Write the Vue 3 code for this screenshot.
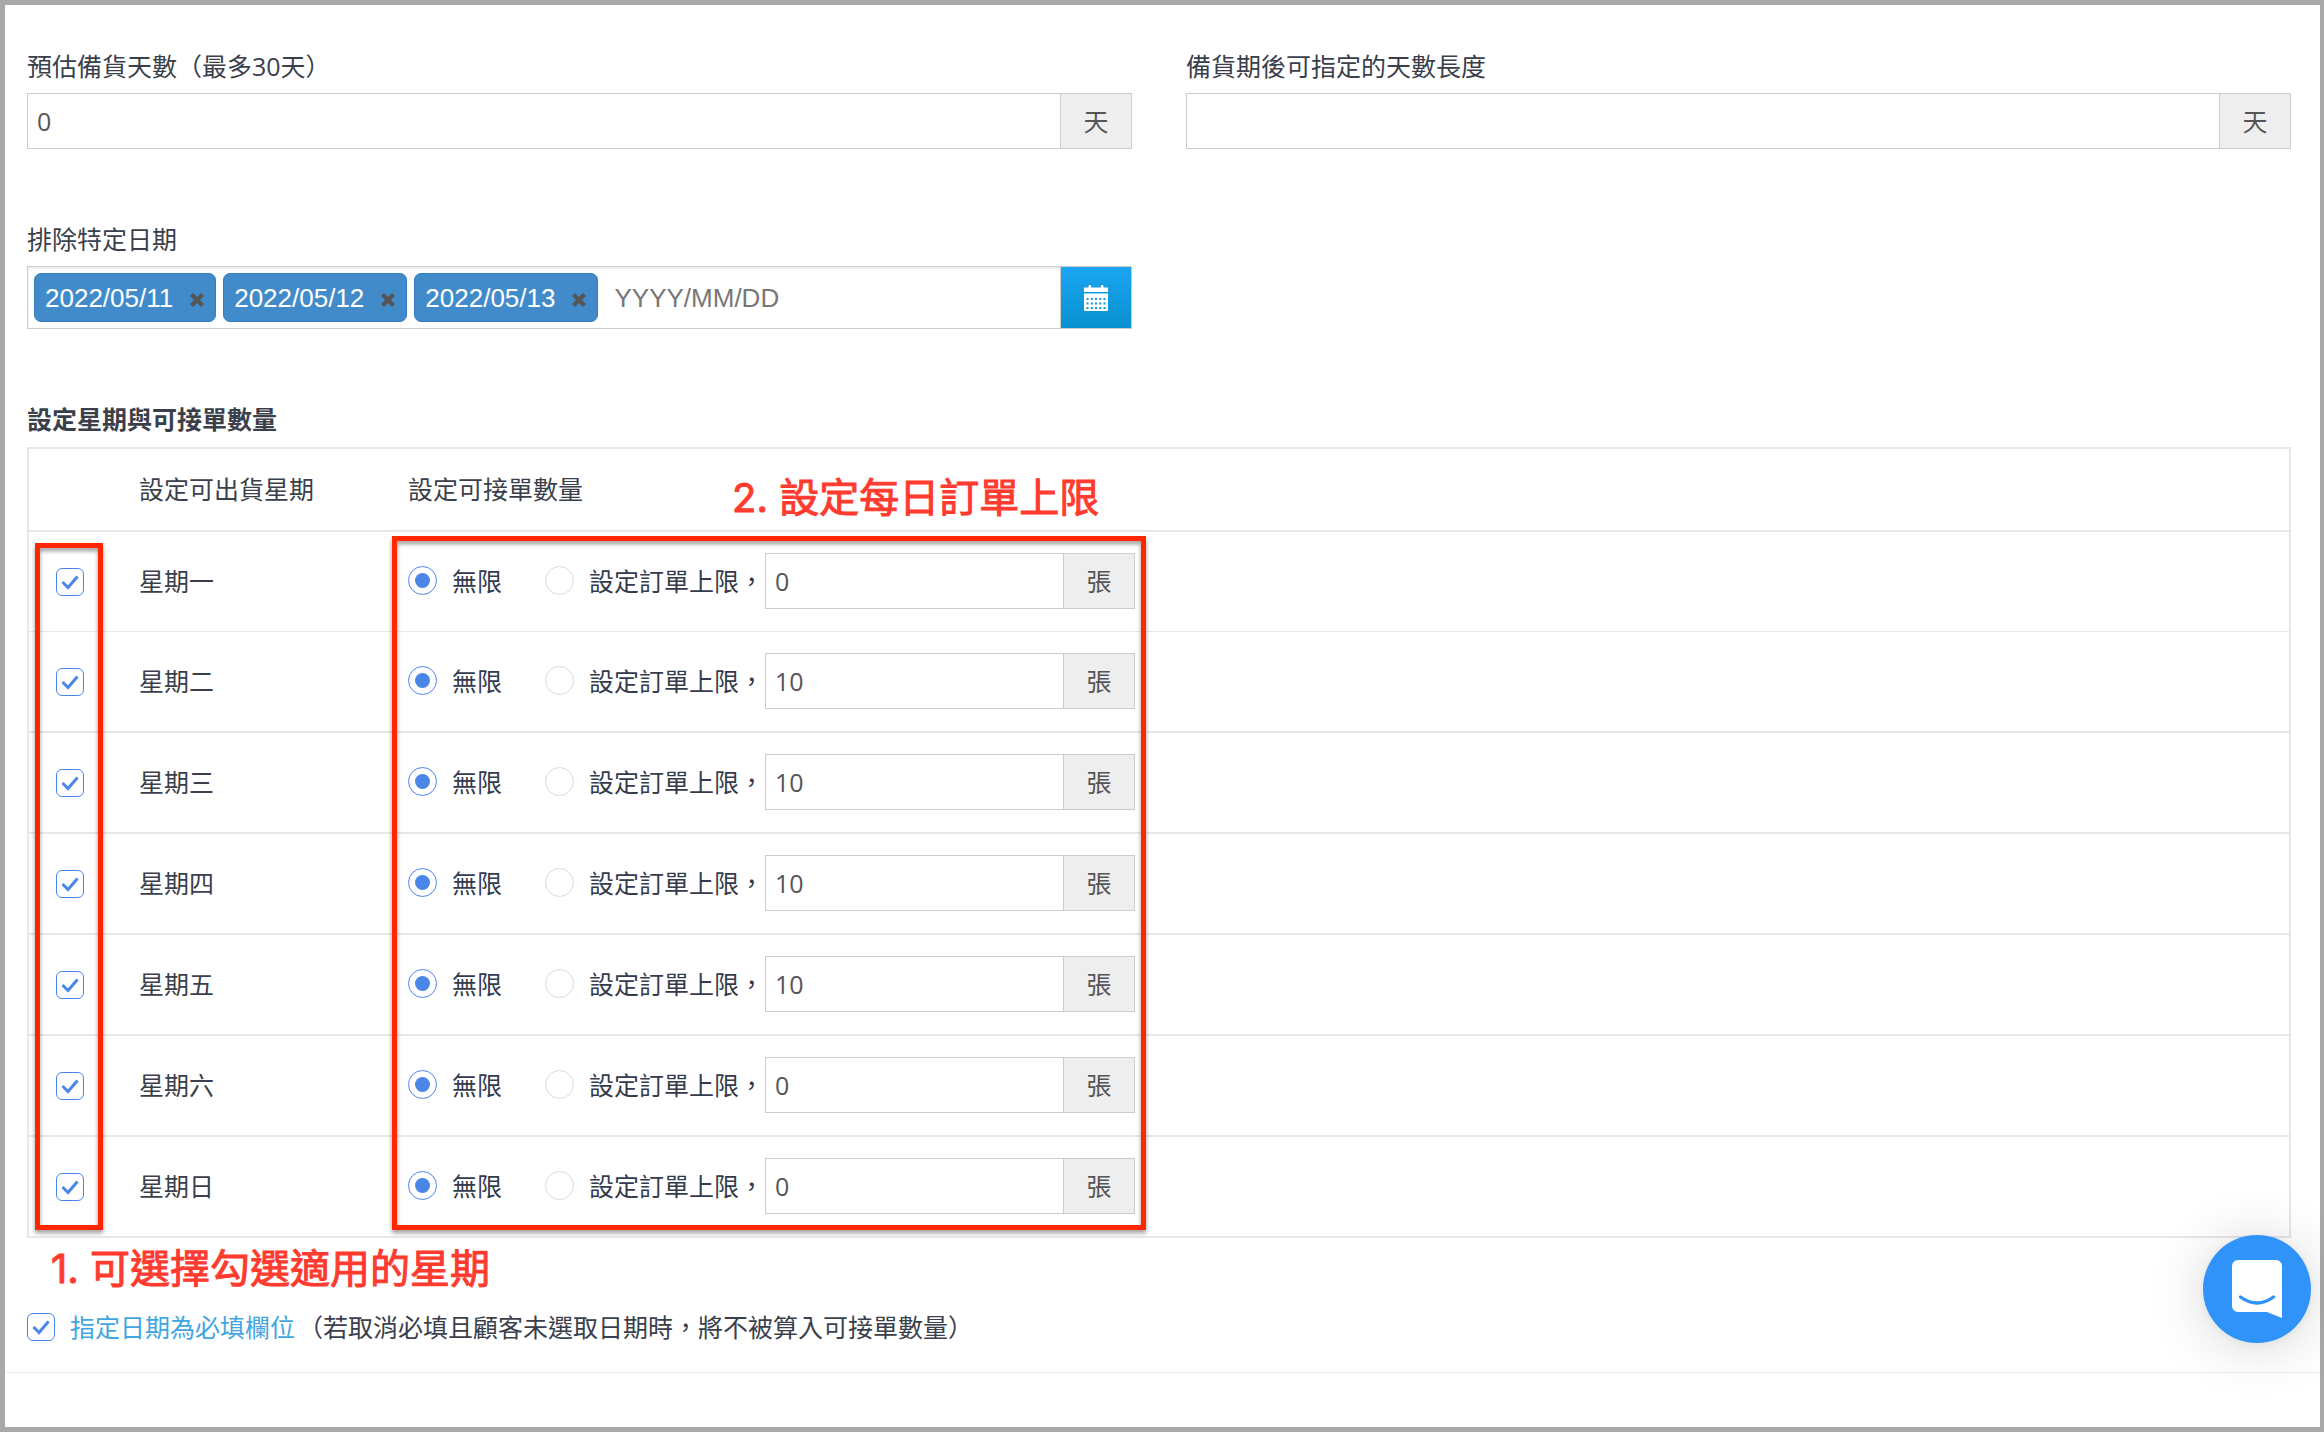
<script setup>
import { ref } from 'vue'

const prepDays = ref('0')
const rangeDays = ref('')
const dateDraft = ref('')
const required = ref(true)
const excludedDates = ref(['2022/05/11', '2022/05/12', '2022/05/13'])
const weekdays = ref([
  { id: 'mon', name: '星期一', enabled: true, mode: 'unlimited', limit: '0' },
  { id: 'tue', name: '星期二', enabled: true, mode: 'unlimited', limit: '10' },
  { id: 'wed', name: '星期三', enabled: true, mode: 'unlimited', limit: '10' },
  { id: 'thu', name: '星期四', enabled: true, mode: 'unlimited', limit: '10' },
  { id: 'fri', name: '星期五', enabled: true, mode: 'unlimited', limit: '10' },
  { id: 'sat', name: '星期六', enabled: true, mode: 'unlimited', limit: '0' },
  { id: 'sun', name: '星期日', enabled: true, mode: 'unlimited', limit: '0' }
])

function removeDate(date) {
  excludedDates.value = excludedDates.value.filter((d) => d !== date)
}
</script>

<template>
  <main class="page">
    <form class="settings" @submit.prevent>
      <div class="columns">
        <div class="field">
          <label class="label" for="prep-days">預估備貨天數（最多30天）</label>
          <div class="group">
            <input id="prep-days" v-model="prepDays" class="input" type="text" />
            <span class="unit">天</span>
          </div>
        </div>
        <div class="field">
          <label class="label" for="range-days">備貨期後可指定的天數長度</label>
          <div class="group">
            <input id="range-days" v-model="rangeDays" class="input" type="text" />
            <span class="unit">天</span>
          </div>
        </div>
      </div>

      <div class="columns">
        <div class="field">
          <label class="label" for="excluded">排除特定日期</label>
          <div class="dates">
            <div class="tags">
              <span v-for="date in excludedDates" :key="date" class="tag">
                {{ date }}
                <button class="remove" type="button" :title="date" @click="removeDate(date)">
                  <svg viewBox="0 0 14 14" width="14" height="14">
                    <path d="M1.500 1.500L12.500 12.500M12.500 1.500L1.500 12.500" stroke="#555" stroke-width="4.200" />
                  </svg>
                </button>
              </span>
              <input id="excluded" v-model="dateDraft" class="draft" type="text" placeholder="YYYY/MM/DD" />
            </div>
            <button class="calendar" type="button" title="日期">
              <svg viewBox="0 0 24 26" width="24" height="26" fill="#fff">
                <path d="M1 2.500h3.500V.8a.8.8 0 0 1 .8-.8h1a.8.8 0 0 1 .8.8v1.700h9.800V.8a.8.8 0 0 1 .8-.8h1a.8.8 0 0 1 .8.8v1.700H23a1 1 0 0 1 1 1V7H0V3.500a1 1 0 0 1 1-1z" />
                <path fill-rule="evenodd" d="M0 8.500h24V25a1 1 0 0 1-1 1H1a1 1 0 0 1-1-1zM2.500 13v2h2v-2zM6.800 13v2h2v-2zM11 13v2h2v-2zM15.300 13v2h2v-2zM19.500 13v2h2v-2zM2.500 17.500v2h2v-2zM6.800 17.500v2h2v-2zM11 17.500v2h2v-2zM15.300 17.500v2h2v-2zM19.500 17.500v2h2v-2zM2.500 22v2h2v-2zM6.800 22v2h2v-2zM11 22v2h2v-2zM15.300 22v2h2v-2zM19.500 22v2h2v-2z" />
              </svg>
            </button>
          </div>
        </div>
      </div>

      <h2 class="title">設定星期與可接單數量</h2>
      <div class="board">
        <table class="week">
          <colgroup>
            <col class="col-check" />
            <col class="col-day" />
            <col />
          </colgroup>
          <thead>
            <tr>
              <th></th>
              <th scope="col">設定可出貨星期</th>
              <th scope="col">設定可接單數量</th>
            </tr>
          </thead>
          <tbody>
            <tr v-for="day in weekdays" :key="day.id">
              <td class="pick">
                <span class="check">
                  <input :id="day.id" v-model="day.enabled" type="checkbox" />
                  <svg v-if="day.enabled" viewBox="0 0 28 28" width="28" height="28">
                    <path d="M6.500 14L12 19.500L21.500 8.500" />
                  </svg>
                </span>
              </td>
              <td><label :for="day.id">{{ day.name }}</label></td>
              <td>
                <div class="quota">
                  <label class="choice">
                    <input v-model="day.mode" type="radio" :name="day.id + '-mode'" value="unlimited" />
                    無限
                  </label>
                  <label class="choice">
                    <input v-model="day.mode" type="radio" :name="day.id + '-mode'" value="limited" />
                    設定訂單上限，
                  </label>
                  <div class="group limit">
                    <input v-model="day.limit" class="input" type="text" :aria-label="day.name" />
                    <span class="unit">張</span>
                  </div>
                </div>
              </td>
            </tr>
          </tbody>
        </table>
        <div class="mark mark-days"></div>
        <div class="mark mark-quota"></div>
        <p class="hint hint-quota">2. 設定每日訂單上限</p>
      </div>
      <p class="hint hint-days">1. 可選擇勾選適用的星期</p>

      <div class="required">
        <span class="check">
          <input id="required" v-model="required" type="checkbox" />
          <svg v-if="required" viewBox="0 0 28 28" width="28" height="28">
            <path d="M6.500 14L12 19.500L21.500 8.500" />
          </svg>
        </span>
        <label for="required"><span class="accent">指定日期為必填欄位</span>（若取消必填且顧客未選取日期時，將不被算入可接單數量）</label>
      </div>
    </form>

    <button class="chat" type="button" title="Chat">
      <svg viewBox="0 0 50 58" width="50" height="58">
        <path d="M6 0h38a6 6 0 0 1 6 6v52L35 52H6a6 6 0 0 1-6-6V6a6 6 0 0 1 6-6z" fill="#fff" />
        <path d="M8.500 37Q25 49 41.500 37" fill="none" stroke="#3093f9" stroke-width="3.400" stroke-linecap="round" />
      </svg>
    </button>
  </main>
</template>

<style>
body {
  margin: 0;
}
</style>

<style scoped>
* {
  box-sizing: border-box;
}

.page {
  min-height: 100vh;
  border: 5px solid #a9a9a9;
  border-right-width: 4px;
  background: #fff;
  color: #3a3f4b;
  font: 25px/36px "Open Sans", "Noto Sans CJK TC", sans-serif;
}

input,
button {
  margin: 0;
  padding: 0;
  border: 0;
  background: none;
  font: inherit;
}

.settings {
  padding: 43px 29px 27px 22px;
  border-bottom: 1px solid #ececec;
}

.columns {
  display: grid;
  grid-template-columns: 1fr 1fr;
  column-gap: 54px;
  margin-bottom: 72px;
}

.label {
  display: block;
  margin-bottom: 9px;
}

.group {
  display: flex;
  height: 56px;
  border: 1px solid #ccc;
  color: #555;
}

.input {
  flex: 1;
  min-width: 0;
  padding: 0 9px;
  color: #555;
}

.unit {
  display: grid;
  place-items: center;
  width: 71px;
  border-left: 1px solid #ccc;
  background: #eee;
}

.dates {
  display: flex;
  border: 1px solid #ccc;
  font-family: "Liberation Sans", sans-serif;
  font-size: 26px;
}

.tags {
  display: flex;
  flex: 1;
  gap: 7px;
  padding: 6px;
  box-shadow: inset 0 2px 2px rgba(0, 0, 0, 0.07);
}

.tag {
  display: flex;
  align-items: center;
  gap: 17px;
  height: 49px;
  padding: 0 11px 0 10px;
  border: 1px solid #357ebd;
  border-radius: 7px;
  background: #428bca;
  color: #fff;
}

.remove {
  display: flex;
  padding-top: 4px;
}

.draft {
  flex: 1;
  min-width: 0;
  padding-left: 9px;
  color: #555;
}

.draft::placeholder {
  color: #777;
}

.calendar {
  display: grid;
  place-items: center;
  width: 71px;
  border-left: 1px solid #ccc;
  background: linear-gradient(#1ba5f2, #0990cf);
}

.title {
  margin: 0 0 10px;
  font-size: 25px;
  font-weight: 600;
}

.board {
  position: relative;
}

.week {
  width: 100%;
  table-layout: fixed;
  border: 2px solid #e7e7e7;
  border-spacing: 0;
}

.col-check {
  width: 110px;
}

.col-day {
  width: 269px;
}

th,
td {
  height: 101px;
  padding: 0 0 2px;
  border-bottom: 2px solid #e7e7e7;
  text-align: left;
  font-weight: 400;
}

th {
  height: 83px;
}

tbody tr:first-child td {
  height: 100px;
  border-bottom-width: 1px;
}

tbody tr:last-child td {
  height: 99px;
  border-bottom: 0;
}

td.pick {
  padding: 0 0 0 27px;
}

.check {
  display: grid;
  width: 28px;
  height: 28px;
}

.check input,
.check svg {
  grid-area: 1 / 1;
}

.check input {
  appearance: none;
  width: 28px;
  height: 28px;
  border: 1px solid #4a86e8;
  border-radius: 6px;
}

.check svg {
  fill: none;
  stroke: #4a86e8;
  stroke-width: 3;
  pointer-events: none;
}

.quota {
  display: flex;
  align-items: center;
}

.choice {
  display: flex;
  align-items: center;
  gap: 15px;
  color: #333b4d;
}

.choice + .choice {
  margin-left: 43px;
}

.choice input {
  appearance: none;
  display: grid;
  place-items: center;
  width: 29px;
  height: 29px;
  border: 1px solid #d5dde6;
  border-radius: 50%;
}

.choice input:checked {
  border-color: #4a86e8;
}

.choice input:checked::before {
  content: "";
  width: 15px;
  height: 15px;
  border-radius: 50%;
  background: #4a86e8;
}

.limit {
  width: 370px;
  margin-left: 1px;
}

.mark {
  position: absolute;
  bottom: 8px;
  border: 5px solid #ff2600;
  filter: drop-shadow(0 3px 2px rgba(0, 0, 0, 0.4));
  pointer-events: none;
}

.mark-days {
  top: 96px;
  left: 8px;
  width: 68px;
}

.mark-quota {
  top: 89px;
  left: 365px;
  width: 754px;
}

.hint {
  margin: 0;
  color: #ff3b30;
  font: 400 40px/48px Inter, "Noto Sans CJK TC", sans-serif;
  -webkit-text-stroke: 1px #ff3b30;
}

.hint-quota {
  position: absolute;
  top: 27px;
  left: 705px;
}

.hint-days {
  padding: 7px 0 16px 24px;
}

.required {
  display: flex;
  align-items: center;
  gap: 15px;
}

.accent {
  margin-right: 3px;
  color: #41a6df;
}

.chat {
  position: fixed;
  right: 13px;
  bottom: 89px;
  display: grid;
  place-items: center;
  width: 108px;
  height: 108px;
  border-radius: 50%;
  background: #3093f9;
  box-shadow: 0 2px 11px rgba(0, 0, 0, 0.06), 0 4px 58px rgba(0, 0, 0, 0.16);
}
</style>
